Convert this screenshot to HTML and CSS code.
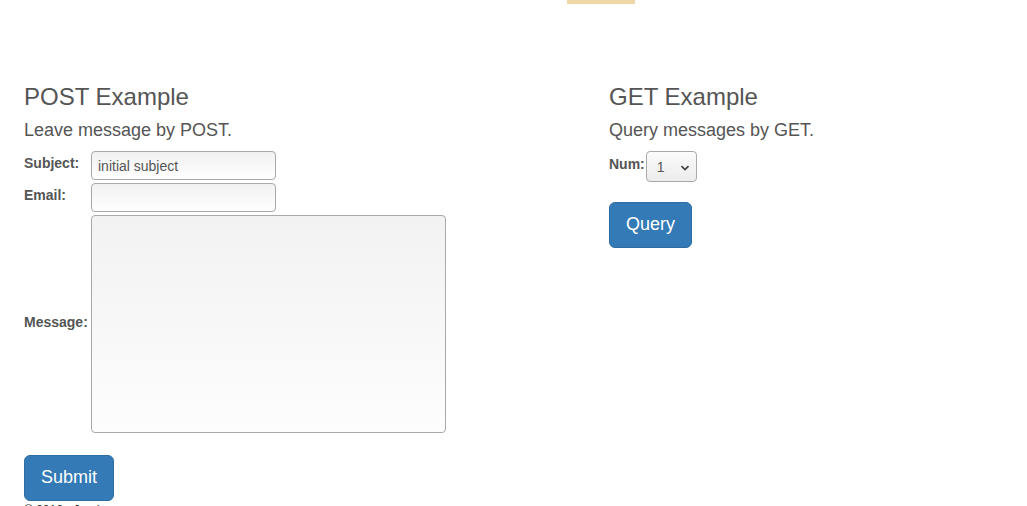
FILE: index.html
```html
<!DOCTYPE html>
<html>
<head>
<meta charset="utf-8">
<title>Examples</title>
<link rel="stylesheet" href="styles.css">
</head>
<body>
<div class="banner"><div class="banner-img"></div></div>
<div class="columns">
  <section class="col col-left">
    <h3 class="title">POST Example</h3>
    <p class="lead">Leave message by POST.</p>
    <form class="form-grid">
      <label class="lbl">Subject:</label>
      <input class="field field-short" type="text" value="initial subject">
      <label class="lbl">Email:</label>
      <input class="field field-short" type="text">
      <label class="lbl">Message:</label>
      <textarea class="field field-area"></textarea>
    </form>
    <button class="btn btn-submit" type="button">Submit</button>
    <footer class="foot">© 2016 - Jandy</footer>
  </section>
  <section class="col col-right">
    <h3 class="title">GET Example</h3>
    <p class="lead">Query messages by GET.</p>
    <div class="num-row">
      <label class="lbl">Num:</label>
      <select class="num-select"><option>1</option><option>2</option><option>3</option></select>
    </div>
    <button class="btn btn-query" type="button">Query</button>
  </section>
</div>
</body>
</html>
```
FILE: styles.css
```css
html, body {
  margin: 0;
  padding: 0;
  background: #fff;
}
body {
  font-family: "Liberation Sans", Arial, sans-serif;
  font-size: 14px;
  line-height: 1.42857;
  color: #555;
  overflow: hidden;
}
.banner {
  height: 4px;
  padding-left: 567px;
}
.banner-img {
  width: 68px;
  height: 4px;
  background: #eed9a6;
}
.columns {
  display: flex;
  padding-left: 24px;
  padding-top: 80px;
}
.col-left {
  width: 585px;
  flex: none;
}
.col-right {
  flex: 1;
}
.title {
  margin: 0;
  font-size: 24px;
  font-weight: 500;
  line-height: 1.1;
  color: #555;
}
.lead {
  margin: 8px 0 0;
  font-size: 18px;
  font-weight: 300;
  line-height: 1.42857;
}
.form-grid {
  margin-top: 7px;
  display: grid;
  grid-template-columns: 67px auto;
  row-gap: 3px;
  align-items: center;
  justify-items: start;
}
.lbl {
  display: inline-block;
  font-weight: bold;
  font-size: 14px;
  margin-bottom: 3px;
  color: #555;
}
.field {
  box-sizing: border-box;
  border: 1px solid #a9a9a9;
  border-radius: 4px;
  background: linear-gradient(#f1f1f1, #fff);
  font-family: "Liberation Sans", Arial, sans-serif;
  font-size: 14px;
  color: #555;
  padding: 0 6px;
  margin: 0;
  outline: none;
}
.field-short {
  width: 185px;
  height: 29px;
}
.field-area {
  width: 355px;
  height: 218px;
  resize: none;
  background: linear-gradient(#f2f2f2, #fdfdfd);
}
.btn {
  display: inline-block;
  box-sizing: border-box;
  height: 46px;
  padding: 0 16px;
  font-family: "Liberation Sans", Arial, sans-serif;
  font-size: 18px;
  line-height: 1.3333;
  color: #fff;
  background: #337ab7;
  border: 1px solid #2e6da4;
  border-radius: 6px;
}
.btn-submit {
  margin-top: 22px;
  width: 90px;
}
.btn-query {
  margin-top: 20px;
  width: 83px;
}
.foot {
  margin-top: 1px;
  font-size: 12px;
  color: #333;
}
.num-row {
  margin-top: 7px;
  display: flex;
  align-items: center;
  gap: 1px;
}
.num-select {
  -webkit-appearance: none;
  appearance: none;
  box-sizing: border-box;
  width: 51px;
  height: 31px;
  border: 1px solid #a9a9a9;
  border-radius: 4px;
  padding: 0 0 0 10px;
  font-family: "Liberation Sans", Arial, sans-serif;
  font-size: 14px;
  color: #555;
  background:
    url("data:image/svg+xml,%3Csvg xmlns='http://www.w3.org/2000/svg' width='10' height='6' viewBox='0 0 10 6'%3E%3Cpath d='M1.5 1.2 L5 4.6 L8.5 1.2' fill='none' stroke='%23444' stroke-width='1.8'/%3E%3C/svg%3E") no-repeat 33px 13px,
    linear-gradient(#fbfbfb, #ececec);
  outline: none;
}
```
